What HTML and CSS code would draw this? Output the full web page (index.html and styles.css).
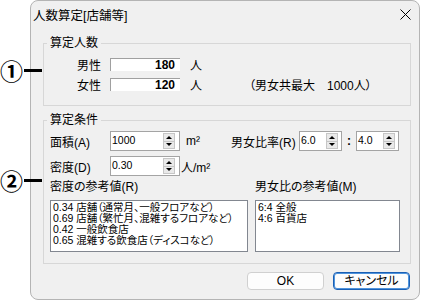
FILE: index.html
```html
<!DOCTYPE html>
<html lang="ja">
<head>
    <meta charset="UTF-8">
    <title>人数算定[店舗等]</title>
    <link rel="stylesheet" href="styles.css">
</head>
<body>
    <div class="callout callout-1"><span class="num">①</span><span class="lead"></span></div>
    <div class="callout callout-2"><span class="num">②</span><span class="lead"></span></div>

    <div class="dialog">
        <div class="titlebar">
            <span class="title">人数算定[店舗等]</span>
            <svg class="close" width="11" height="11" viewBox="0 0 11 11">
                <path d="M0.5 0.5L10.5 10.5M10.5 0.5L0.5 10.5" stroke="#000" stroke-width="1" fill="none"/>
            </svg>
        </div>

        <div class="group group-count">
            <span class="legend">算定人数</span>
            <div class="count-row">
                <span class="count-label">男性</span>
                <span class="static">180</span>
                <span class="unit">人</span>
            </div>
            <div class="count-row">
                <span class="count-label">女性</span>
                <span class="static">120</span>
                <span class="unit">人</span>
                <span class="note">（男女共最大　1000人）</span>
            </div>
        </div>

        <div class="group group-cond">
            <span class="legend">算定条件</span>
            <div class="cond-row">
                <span class="cond-label">面積(A)</span>
                <div class="spin">
                    <span class="spin-value">1000</span>
                    <span class="spin-buttons"><span class="spin-up"></span><span class="spin-down"></span></span>
                </div>
                <span class="area-unit">m²</span>
                <span class="ratio-label">男女比率(R)</span>
                <div class="spin spin-narrow">
                    <span class="spin-value">6.0</span>
                    <span class="spin-buttons"><span class="spin-up"></span><span class="spin-down"></span></span>
                </div>
                <span class="colon">:</span>
                <div class="spin spin-narrow">
                    <span class="spin-value">4.0</span>
                    <span class="spin-buttons"><span class="spin-up"></span><span class="spin-down"></span></span>
                </div>
            </div>
            <div class="cond-row">
                <span class="cond-label">密度(D)</span>
                <div class="spin">
                    <span class="spin-value">0.30</span>
                    <span class="spin-buttons"><span class="spin-up"></span><span class="spin-down"></span></span>
                </div>
                <span class="density-unit">人/m²</span>
            </div>
            <div class="ref-grid">
                <span class="ref-label">密度の参考値(R)</span>
                <span class="ref-label">男女比の参考値(M)</span>
                <div class="listbox">
                    <div>0.34 店舗（通常月、一般フロアなど）</div>
                    <div>0.69 店舗（繁忙月、混雑するフロアなど）</div>
                    <div>0.42 一般飲食店</div>
                    <div>0.65 混雑する飲食店（ディスコなど）</div>
                </div>
                <div class="listbox">
                    <div>6:4 全般</div>
                    <div>4:6 百貨店</div>
                </div>
            </div>
        </div>

        <div class="buttons">
            <button class="btn">OK</button>
            <button class="btn btn-default">キャンセル</button>
        </div>
    </div>
</body>
</html>
```

FILE: styles.css
```css
body {
    margin: 0;
    width: 421px;
    height: 303px;
    overflow: hidden;
    position: relative;
    background: #fff;
    color: #000;
    font-family: "Liberation Sans", "Noto Sans CJK JP", sans-serif;
    font-size: 12px;
    font-feature-settings: "palt";
}

/* callout markers outside the dialog */
.callout {
    position: absolute;
    left: 0;
    display: flex;
    align-items: center;
    height: 22px;
    z-index: 2;
}

.callout-1 {
    top: 59px;
}

.callout-2 {
    top: 169px;
}

.callout .num {
    font-family: "Noto Sans CJK JP", sans-serif;
    font-weight: bold;
    font-size: 23px;
    line-height: 22px;
    width: 23px;
}

.callout .lead {
    width: 18px;
    height: 3px;
    margin-left: 1px;
    background: #000;
}

.dialog {
    margin-left: 30px;
    width: 390px;
    height: 300px;
    box-sizing: border-box;
    border: 1px solid #b4b4b4;
    border-radius: 8px;
    background: #f0f0f0;
}

.titlebar {
    display: flex;
    align-items: center;
    justify-content: space-between;
    height: 27px;
    padding: 0 8px 0 2px;
}

.title {
    font-size: 12.5px;
}

.group {
    position: relative;
    margin: 0 8px 0 12px;
    border: 1px solid #d7d7d7;
}

.legend {
    position: absolute;
    top: -9px;
    left: 3px;
    padding: 0 3px;
    line-height: 16px;
    background: #f0f0f0;
}

.group-count {
    margin-top: 15px;
    padding: 14px 0 14px 33px;
    display: flex;
    flex-direction: column;
    gap: 7px;
}

.count-row {
    display: flex;
    align-items: center;
    height: 13px;
}

.count-label {
    width: 33px;
}

.static {
    width: 70px;
    height: 13px;
    box-sizing: border-box;
    border-top: 1px solid #a0a0a0;
    border-left: 1px solid #a0a0a0;
    background: #fff;
    text-align: right;
    padding-right: 5px;
    font-weight: bold;
    line-height: 12px;
}

.unit {
    margin-left: 10px;
}

.note {
    margin-left: 47px;
}

.group-cond {
    margin-top: 14px;
    padding: 10px 0 11px 6px;
}

.cond-row {
    display: flex;
    align-items: center;
    height: 20px;
}

.cond-row + .cond-row {
    margin-top: 5px;
}

.cond-label {
    width: 60px;
}

.spin {
    display: flex;
    align-items: center;
    width: 70px;
    height: 20px;
    box-sizing: border-box;
    border: 1px solid #a4a4a4;
    background: #fff;
    padding: 0 4px 0 1px;
}

.spin-narrow {
    width: 43px;
    padding-right: 3px;
}

.spin-value {
    flex: 1;
    font-size: 10.5px;
    line-height: 12px;
    margin-top: -3px;
}

.spin-buttons {
    display: flex;
    flex-direction: column;
    width: 12px;
    height: 16px;
}

.spin-up, .spin-down {
    flex: 1;
    display: flex;
    align-items: center;
    justify-content: center;
    background: #e9e9e9;
    border: 1px solid #c6c6c6;
}

.spin-down {
    border-top: none;
}

.spin-up::after {
    content: "";
    border-left: 3px solid transparent;
    border-right: 3px solid transparent;
    border-bottom: 3px solid #000;
}

.spin-down::after {
    content: "";
    border-left: 3px solid transparent;
    border-right: 3px solid transparent;
    border-top: 3px solid #000;
}

.area-unit {
    width: 45px;
    margin-left: 6px;
}

.ratio-label {
    width: 68px;
}

.colon {
    width: 14px;
    text-align: center;
    font-weight: bold;
}

.density-unit {
    margin-left: 1px;
}

.ref-grid {
    display: grid;
    grid-template-columns: 198px 145px;
    grid-template-rows: 14px 52px;
    column-gap: 7px;
    row-gap: 6px;
    margin-top: 4px;
}

.ref-label {
    line-height: 14px;
}

.listbox {
    box-sizing: border-box;
    height: 52px;
    border: 1px solid #828790;
    background: #fff;
    padding: 1px 2px;
    font-size: 10.5px;
    line-height: 11px;
    overflow: hidden;
    white-space: nowrap;
}

.buttons {
    display: flex;
    justify-content: flex-end;
    gap: 9px;
    margin-top: 8px;
    padding-right: 9px;
}

.btn {
    width: 77px;
    height: 18px;
    box-sizing: border-box;
    border: 1px solid #d0d0d0;
    border-radius: 4px;
    background: #fdfdfd;
    font-family: "Liberation Sans", "Noto Sans CJK JP", sans-serif;
    font-size: 12px;
    font-feature-settings: "palt";
    color: #000;
    padding: 0;
    line-height: 14px;
}

.btn-default {
    border-color: #1a5fb4;
    box-shadow: inset 0 0 0 1px #4f94dc;
}
```
